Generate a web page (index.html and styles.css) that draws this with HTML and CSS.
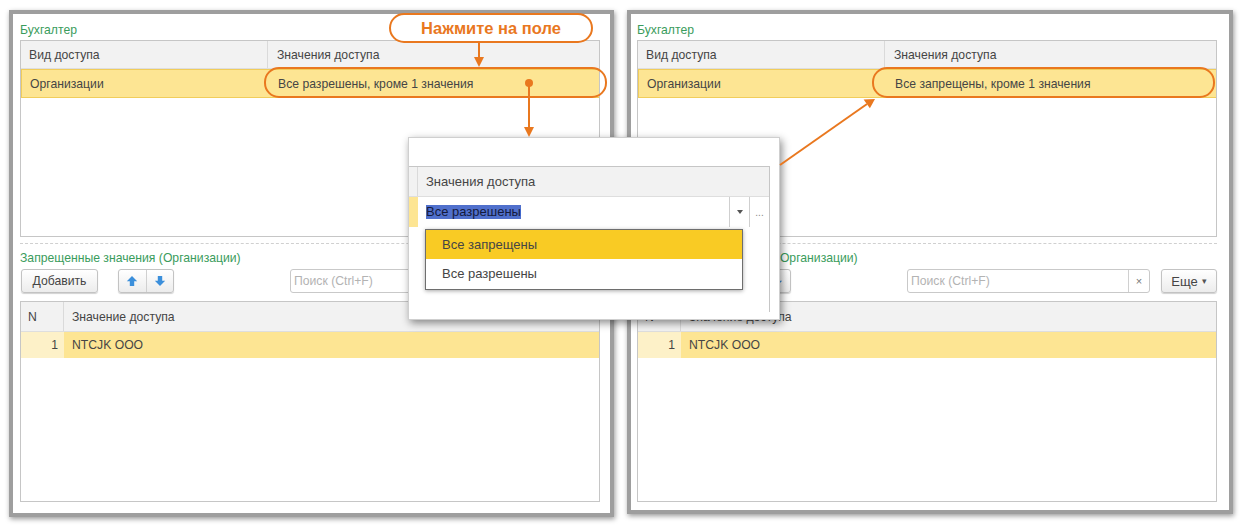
FILE: index.html
```html
<!DOCTYPE html>
<html lang="ru">
<head>
<meta charset="utf-8">
<title>Бухгалтер</title>
<link rel="stylesheet" href="styles.css">
</head>
<body>
<div class="stage">
  <section class="panel panel-left">
    <div class="group-title">Бухгалтер</div>
    <div class="grid grid-top">
      <div class="grid-head">
        <div class="cell c-kind">Вид доступа</div>
        <div class="cell c-val">Значения доступа</div>
      </div>
      <div class="grid-row selected">
        <div class="cell c-kind">Организации</div>
        <div class="cell c-val">Все разрешены, кроме 1 значения</div>
      </div>
    </div>
    <div class="sep"></div>
    <div class="group-title title-small">Запрещенные значения (Организации)</div>
    <div class="toolbar">
      <div class="btn btn-add">Добавить</div>
      <div class="btn-group">
        <div class="btn-part"><svg class="ico" viewBox="0 0 12 12"><path d="M6 1 L11.2 6.2 H8.2 V11 H3.8 V6.2 H0.8 Z"/></svg></div>
        <div class="btn-part"><svg class="ico" viewBox="0 0 12 12"><path d="M6 11 L11.2 5.8 H8.2 V1 H3.8 V5.8 H0.8 Z"/></svg></div>
      </div>
      <div class="search"><span class="ph">Поиск (Ctrl+F)</span><span class="clear covered">×</span></div>
      <div class="btn btn-more covered">Еще <span class="caret">▾</span></div>
    </div>
    <div class="grid grid-bottom">
      <div class="grid-head">
        <div class="cell c-n">N</div>
        <div class="cell c-item">Значение доступа</div>
      </div>
      <div class="grid-row selected-soft">
        <div class="cell c-n num">1</div>
        <div class="cell c-item">NTCJK OOO</div>
      </div>
    </div>
  </section>

  <section class="panel panel-right">
    <div class="group-title">Бухгалтер</div>
    <div class="grid grid-top">
      <div class="grid-head">
        <div class="cell c-kind">Вид доступа</div>
        <div class="cell c-val">Значения доступа</div>
      </div>
      <div class="grid-row selected">
        <div class="cell c-kind">Организации</div>
        <div class="cell c-val">Все запрещены, кроме 1 значения</div>
      </div>
    </div>
    <div class="sep"></div>
    <div class="group-title title-small">Запрещенные значения (Организации)</div>
    <div class="toolbar">
      <div class="btn btn-add">Добавить</div>
      <div class="btn-group">
        <div class="btn-part"><svg class="ico" viewBox="0 0 12 12"><path d="M6 1 L11.2 6.2 H8.2 V11 H3.8 V6.2 H0.8 Z"/></svg></div>
        <div class="btn-part"><svg class="ico" viewBox="0 0 12 12"><path d="M6 11 L11.2 5.8 H8.2 V1 H3.8 V5.8 H0.8 Z"/></svg></div>
      </div>
      <div class="search"><span class="ph">Поиск (Ctrl+F)</span><span class="clear">×</span></div>
      <div class="btn btn-more">Еще <span class="caret">▾</span></div>
    </div>
    <div class="grid grid-bottom">
      <div class="grid-head">
        <div class="cell c-n">N</div>
        <div class="cell c-item">Значение доступа</div>
      </div>
      <div class="grid-row selected-soft">
        <div class="cell c-n num">1</div>
        <div class="cell c-item">NTCJK OOO</div>
      </div>
    </div>
  </section>
</div>

<div class="popup">
  <div class="pop-grid">
    <div class="pop-head">
      <div class="pop-stub"></div>
      <div class="pop-title">Значения доступа</div>
    </div>
    <div class="pop-row">
      <div class="pop-stub stub-yellow"></div>
      <div class="pop-input"><span class="sel">Все разрешены</span></div>
      <div class="pop-btn"><span class="dd"></span></div>
      <div class="pop-btn dots">...</div>
    </div>
  </div>
  <div class="dropdown">
    <div class="dd-item active">Все запрещены</div>
    <div class="dd-item">Все разрешены</div>
  </div>
</div>

<div class="callout">Нажмите на поле</div>
<div class="ring ring-left"></div>
<div class="ring ring-right"></div>

<svg class="arrows" width="1244" height="527" viewBox="0 0 1244 527">
  <g stroke="#e9781f" stroke-width="2" fill="none">
    <line x1="479" y1="43" x2="479" y2="59"/>
    <line x1="529" y1="83" x2="529" y2="128"/>
    <line x1="780" y1="165" x2="867" y2="104"/>
  </g>
  <g fill="#e9781f">
    <polygon points="474,57 484,57 479,67"/>
    <circle cx="529" cy="83" r="4"/>
    <polygon points="524,127 534,127 529,137"/>
    <polygon points="875,99 869.9,108.3 863.6,99.5"/>
  </g>
</svg>
</body>
</html>
```

FILE: styles.css
```css
html, body {
  margin: 0;
  padding: 0;
}
body {
  width: 1244px;
  height: 527px;
  overflow: hidden;
  position: relative;
  background: #ffffff;
  font-family: "Liberation Sans", Arial, sans-serif;
  font-size: 12.2px;
  color: #454545;
}

.stage {
  display: flex;
  gap: 13px;
  padding: 10px 0 0 9px;
}

.panel {
  box-sizing: border-box;
  border: 4px solid #9e9e9e;
  box-shadow: 1px 2px 5px rgba(0, 0, 0, 0.4);
  background: #fff;
  display: flex;
  flex-direction: column;
}
.panel-left {
  width: 605px;
  height: 507px;
  padding: 6px 10px 0 7px;
}
.panel-right {
  width: 606px;
  height: 504px;
  padding: 6px 12px 0 6px;
}

.group-title {
  height: 20px;
  line-height: 20px;
  color: #3a9c5c;
  white-space: nowrap;
}
.title-small {
  height: 18px;
  line-height: 18px;
  margin-top: 5px;
}

.grid {
  box-sizing: border-box;
  border: 1px solid #c6c6c6;
  background: #fff;
  width: 580px;
}
.grid-top { height: 197px; }
.grid-bottom { height: 201px; margin-top: 8px; }

.grid-head {
  display: flex;
  height: 27px;
  background: #f2f2f2;
  border-bottom: 1px solid #dedede;
}
.grid-bottom .grid-head { height: 29px; }

.grid-row {
  display: flex;
  box-sizing: border-box;
  height: 29px;
}
.grid-bottom .grid-row { height: 26px; }

.cell {
  box-sizing: border-box;
  display: flex;
  align-items: center;
  white-space: nowrap;
}
.c-kind {
  width: 247px;
  padding-left: 8px;
}
.grid-head .c-kind { border-right: 1px solid #dadada; }
.c-val {
  flex: 1;
  padding-left: 9px;
}
.c-n {
  width: 43px;
  padding-left: 7px;
}
.grid-head .c-n { border-right: 1px solid #dadada; }
.c-n.num {
  justify-content: flex-end;
  padding: 0 6px 0 0;
  background: #fdf1c8;
}
.c-item {
  flex: 1;
  padding-left: 8px;
}

.selected {
  background: #fde593;
  border-top: 1px solid #f1cd5b;
  border-bottom: 1px solid #f1cd5b;
  border-left: 1px solid #f1cd5b;
}
.selected-soft {
  background: #fde593;
}

.sep {
  margin-top: 6px;
  border-top: 1px dashed #d0d0d0;
  width: 580px;
}

.toolbar {
  display: flex;
  align-items: center;
  margin-top: 2px;
  height: 24px;
  width: 580px;
}
.btn {
  box-sizing: border-box;
  height: 24px;
  border: 1px solid #c3c3c3;
  border-radius: 3px;
  background: linear-gradient(#ffffff, #ececec);
  box-shadow: 0 1px 1px rgba(0, 0, 0, 0.18);
  display: flex;
  align-items: center;
  justify-content: center;
  color: #454545;
  white-space: nowrap;
}
.btn-add {
  width: 77px;
  margin-left: 1px;
}
.btn-group {
  box-sizing: border-box;
  margin-left: 20px;
  width: 56px;
  height: 24px;
  display: flex;
  border: 1px solid #c3c3c3;
  border-radius: 3px;
  background: linear-gradient(#ffffff, #ececec);
  box-shadow: 0 1px 1px rgba(0, 0, 0, 0.18);
}
.btn-part {
  flex: 1;
  display: flex;
  align-items: center;
  justify-content: center;
}
.btn-part + .btn-part { border-left: 1px solid #d0d0d0; }
.ico {
  width: 12px;
  height: 12px;
  fill: #3b8fdb;
}
.search {
  box-sizing: border-box;
  margin-left: auto;
  width: 243px;
  height: 24px;
  border: 1px solid #c9c9c9;
  border-radius: 3px;
  display: flex;
  align-items: center;
  background: #fff;
}
.ph {
  flex: 1;
  padding-left: 3px;
  color: #b3b3b3;
}
.clear {
  box-sizing: border-box;
  width: 21px;
  height: 22px;
  border-left: 1px solid #d0d0d0;
  display: flex;
  align-items: center;
  justify-content: center;
  color: #777;
  font-size: 11px;
}
.btn-more {
  margin-left: 11px;
  width: 56px;
  font-size: 13px;
}
.caret {
  font-size: 9px;
  margin-left: 4px;
  color: #555;
}
.covered {
  visibility: hidden;
}

/* popup */
.popup {
  position: absolute;
  left: 408px;
  top: 137px;
  width: 372px;
  height: 183px;
  box-sizing: border-box;
  background: #fff;
  border: 1px solid #cfcfcf;
  box-shadow: 2px 3px 8px rgba(0, 0, 0, 0.45);
  font-size: 13px;
}
.pop-grid {
  margin-top: 28px;
  width: 361px;
  height: 146px;
  box-sizing: border-box;
  border-top: 1px solid #c6c6c6;
  border-right: 1px solid #c6c6c6;
}
.pop-head {
  display: flex;
  height: 29px;
  background: #f2f2f2;
  border-bottom: 1px solid #dedede;
}
.pop-stub {
  width: 9px;
  box-sizing: border-box;
  border-right: 1px solid #dadada;
}
.stub-yellow {
  background: #fde593;
  border-right: none;
}
.pop-title {
  flex: 1;
  display: flex;
  align-items: center;
  padding-left: 8px;
}
.pop-row {
  display: flex;
  height: 30px;
}
.pop-input {
  flex: 1;
  display: flex;
  align-items: center;
  padding-left: 8px;
}
.sel {
  background: #5070cc;
  color: #141a3c;
  line-height: 14px;
}
.pop-btn {
  box-sizing: border-box;
  width: 20px;
  border-left: 1px solid #cfcfcf;
  display: flex;
  align-items: center;
  justify-content: center;
}
.dd {
  width: 0;
  height: 0;
  border-left: 3px solid transparent;
  border-right: 3px solid transparent;
  border-top: 4px solid #555;
}
.dots {
  color: #888;
  font-size: 10px;
}
.dropdown {
  position: absolute;
  left: 16px;
  top: 91px;
  width: 318px;
  height: 61px;
  box-sizing: border-box;
  border: 1px solid #6e6e6e;
  background: #fff;
  box-shadow: 0 1px 4px rgba(0, 0, 0, 0.35);
}
.dd-item {
  height: 29px;
  display: flex;
  align-items: center;
  padding-left: 16px;
}
.dd-item.active {
  background: #f9cb24;
}

/* annotations */
.callout {
  position: absolute;
  left: 389px;
  top: 13px;
  width: 204px;
  height: 30px;
  box-sizing: border-box;
  border: 2px solid #e9781f;
  border-radius: 15px;
  background: #fff;
  color: #e9781f;
  font-weight: bold;
  font-size: 16.5px;
  display: flex;
  align-items: center;
  justify-content: center;
}
.ring {
  position: absolute;
  top: 67px;
  height: 31px;
  box-sizing: border-box;
  border: 2px solid #e9781f;
  border-radius: 15px;
}
.ring-left {
  left: 264px;
  width: 343px;
}
.ring-right {
  left: 872px;
  width: 343px;
}
.arrows {
  position: absolute;
  left: 0;
  top: 0;
  pointer-events: none;
}
```
